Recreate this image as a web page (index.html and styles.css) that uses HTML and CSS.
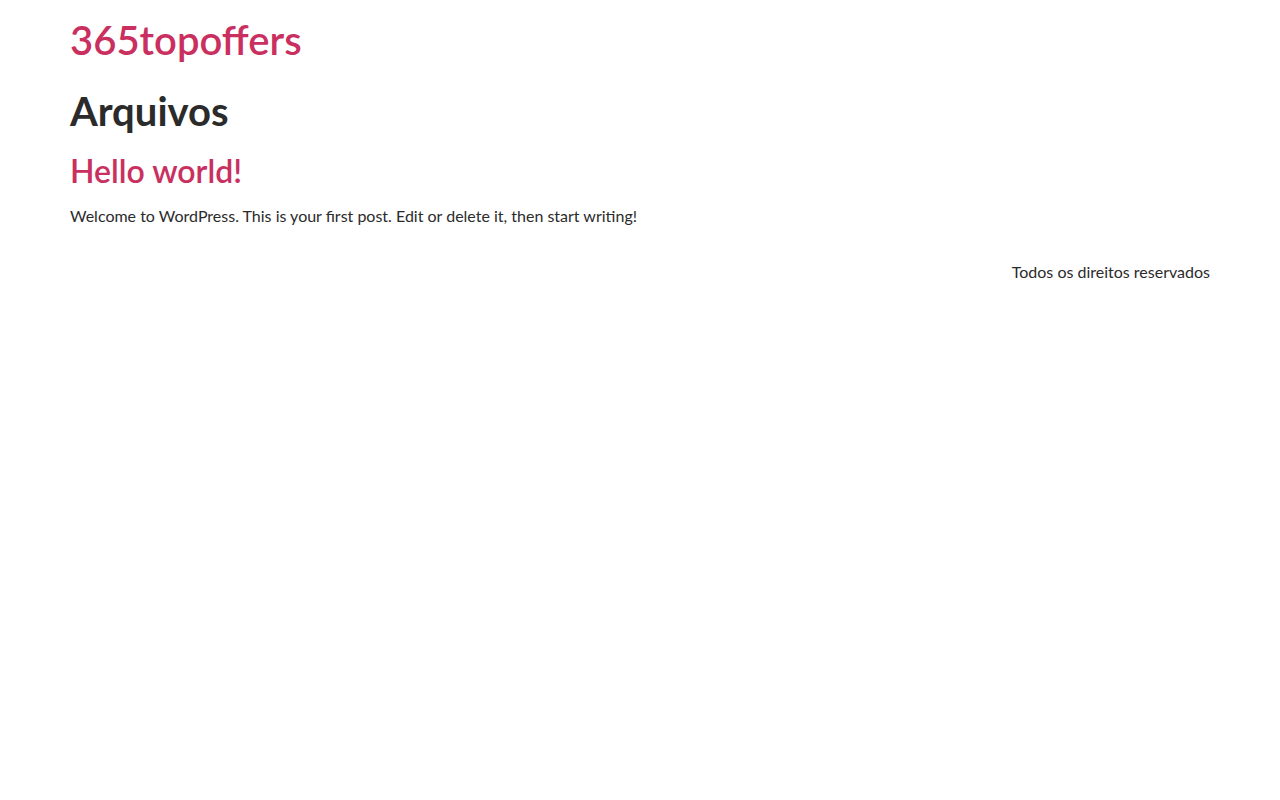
FILE: index.html
```html
<!DOCTYPE html>
<html lang="pt-BR">
<head>
<meta charset="utf-8">
<title>Arquivos - 365topoffers</title>
<link rel="stylesheet" href="styles.css">
</head>
<body>
<div class="container">
  <header class="site-header">
    <a class="site-title" href="#">365topoffers</a>
  </header>
  <main class="archive">
    <h1 class="archive-title">Arquivos</h1>
    <article class="post">
      <h2 class="post-title"><a href="#">Hello world!</a></h2>
      <p class="post-excerpt">Welcome to WordPress. This is your first post. Edit or delete it, then start writing!</p>
    </article>
  </main>
  <footer class="site-footer">
    <p>Todos os direitos reservados</p>
  </footer>
</div>
</body>
</html>
```
FILE: styles.css
```css
html, body {
  margin: 0;
  padding: 0;
  background: #ffffff;
}
body {
  font-family: Lato, "Noto Sans", sans-serif;
  font-size: 16px;
  line-height: 1.5;
  color: #2b2b2b;
}
a {
  color: #c9305f;
  text-decoration: none;
}
.container {
  max-width: 1140px;
  margin: 0 auto;
}
.site-header {
  padding-top: 16px;
}
.site-title {
  font-size: 40px;
  font-weight: 600;
  line-height: 1.2;
  display: inline-block;
}
.archive-title {
  font-size: 40px;
  font-weight: 700;
  line-height: 1.2;
  margin: 23px 0 0;
}
.post-title {
  font-size: 32px;
  font-weight: 600;
  line-height: 1.2;
  margin: 17px 0 0;
}
.post-excerpt {
  margin: 14px 0 0;
}
.site-footer {
  display: flex;
  justify-content: flex-end;
  margin-top: 32px;
}
.site-footer p {
  margin: 0;
}
```
